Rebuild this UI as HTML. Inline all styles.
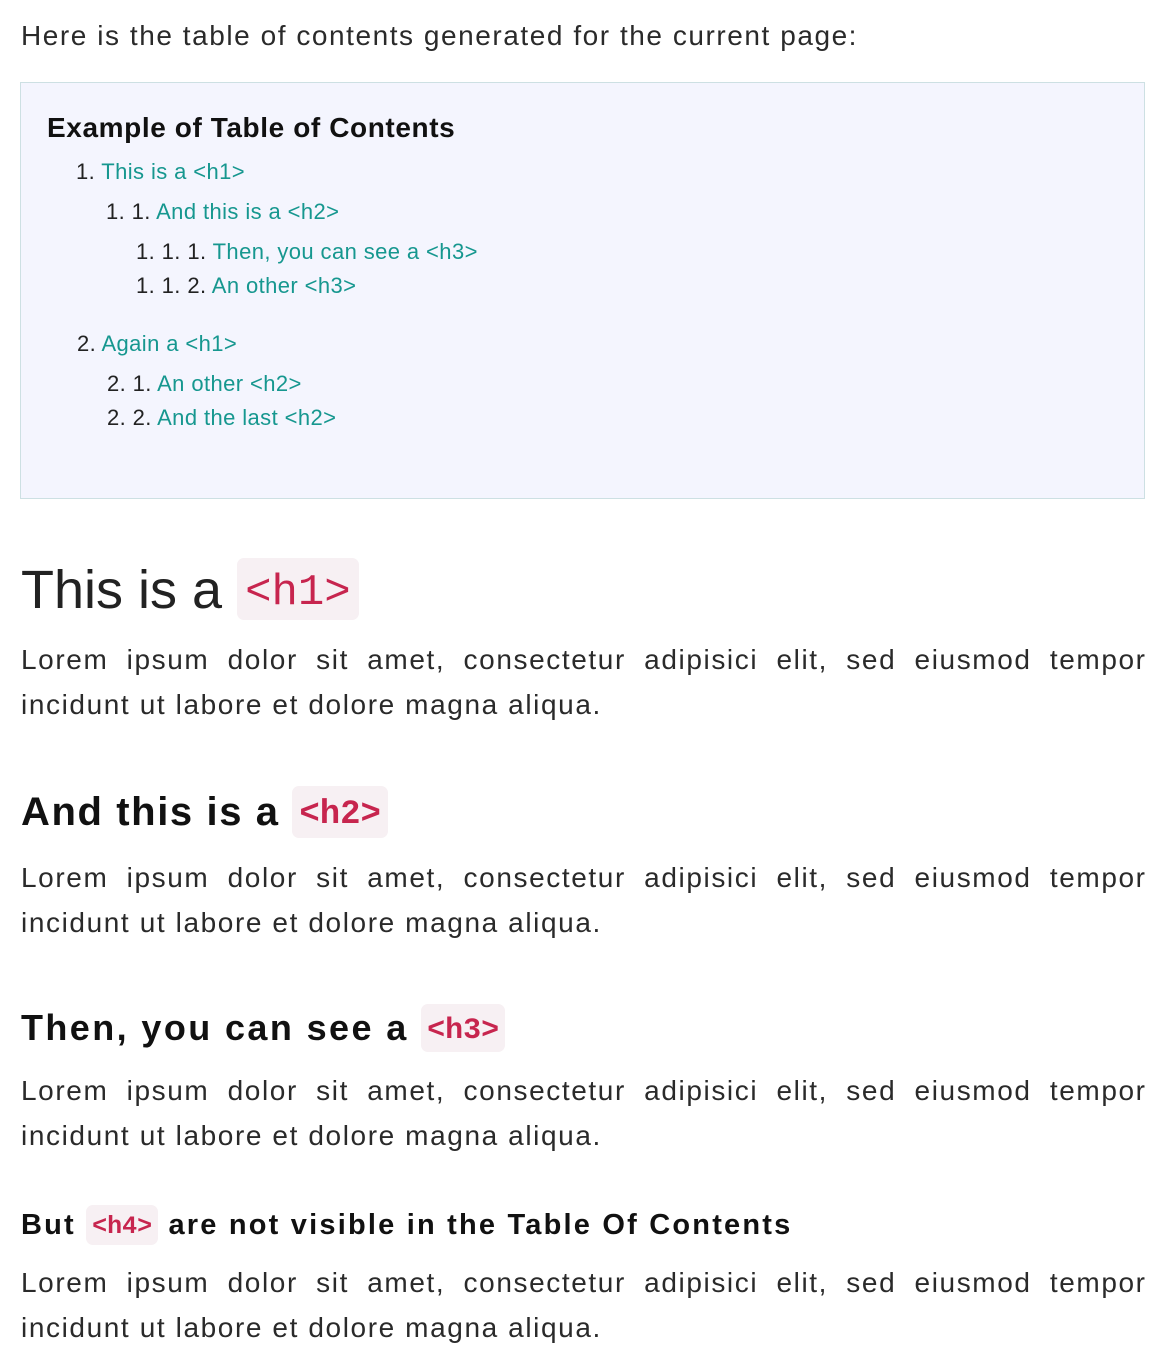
<!DOCTYPE html>
<html><head><meta charset="utf-8"><style>
html,body{margin:0;padding:0;background:#fff;width:1164px;height:1354px;overflow:hidden}
body{position:relative;font-family:"Liberation Sans",sans-serif;color:#222}
.a{position:absolute;white-space:nowrap}
.toc{position:absolute;left:20px;top:82px;width:1123px;height:415px;background:#f4f5fe;border:1px solid #cde0e3}
.t{position:absolute;white-space:nowrap;font-size:22px;line-height:30px;color:#222;letter-spacing:0.4px}
.t span{color:#16978f}
.p{position:absolute;left:21px;width:1124px;font-size:28px;line-height:45px;color:#2a2a2a}
.p .l1{display:block;text-align:justify;text-align-last:justify;white-space:nowrap;letter-spacing:1.6px;margin-right:-1.6px}
.p .l2{display:block;letter-spacing:1.6px;white-space:nowrap}
code{font-family:"Liberation Mono","DejaVu Sans Mono",monospace;color:#c7254e;background:#f7f0f3;border-radius:7px;display:inline-block;letter-spacing:0}
</style></head><body>
<div class="a" style="left:21px;top:18px;font-size:28px;line-height:36px;color:#2a2a2a;letter-spacing:1.55px">Here is the table of contents generated for the current page:</div>
<div class="toc"></div>
<div class="a" style="left:47px;top:112px;font-size:28px;line-height:32px;font-weight:bold;color:#111;letter-spacing:0.6px">Example of Table of Contents</div>
<div class="t" style="left:76px;top:157px">1. <span>This is a &lt;h1&gt;</span></div>
<div class="t" style="left:106px;top:197px">1. 1. <span>And this is a &lt;h2&gt;</span></div>
<div class="t" style="left:136px;top:237px">1. 1. 1. <span>Then, you can see a &lt;h3&gt;</span></div>
<div class="t" style="left:136px;top:271px">1. 1. 2. <span>An other &lt;h3&gt;</span></div>
<div class="t" style="left:77px;top:329px">2. <span>Again a &lt;h1&gt;</span></div>
<div class="t" style="left:107px;top:369px">2. 1. <span>An other &lt;h2&gt;</span></div>
<div class="t" style="left:107px;top:403px">2. 2. <span>And the last &lt;h2&gt;</span></div>

<div class="a" style="left:21px;top:558px;font-size:54px;line-height:64px;color:#222">This is a <code style="font-size:44px;line-height:62px;height:62px;padding:4px 8px 0;box-sizing:border-box;vertical-align:top">&lt;h1&gt;</code></div>
<div class="p" style="top:637px"><span class="l1">Lorem ipsum dolor sit amet, consectetur adipisici elit, sed eiusmod tempor</span><span class="l2">incidunt ut labore et dolore magna aliqua.</span></div>

<div class="a" style="left:21px;top:786px;font-size:40px;line-height:52px;font-weight:bold;color:#111;letter-spacing:1.6px">And this is a <code style="font-size:34px;line-height:52px;height:52px;padding:3px 7px 0;box-sizing:border-box;vertical-align:top">&lt;h2&gt;</code></div>
<div class="p" style="top:855px"><span class="l1">Lorem ipsum dolor sit amet, consectetur adipisici elit, sed eiusmod tempor</span><span class="l2">incidunt ut labore et dolore magna aliqua.</span></div>

<div class="a" style="left:21px;top:1004px;font-size:36px;line-height:48px;font-weight:bold;color:#111;letter-spacing:2.4px">Then, you can see a <code style="font-size:30px;line-height:48px;height:48px;padding:3px 6px 0;box-sizing:border-box;vertical-align:top">&lt;h3&gt;</code></div>
<div class="p" style="top:1068px"><span class="l1">Lorem ipsum dolor sit amet, consectetur adipisici elit, sed eiusmod tempor</span><span class="l2">incidunt ut labore et dolore magna aliqua.</span></div>

<div class="a" style="left:21px;top:1205px;font-size:29px;line-height:40px;font-weight:bold;color:#111;letter-spacing:2.2px">But <code style="font-size:25px;line-height:40px;height:40px;padding:2px 6px 0;box-sizing:border-box;vertical-align:top">&lt;h4&gt;</code> are not visible in the Table Of Contents</div>
<div class="p" style="top:1260px"><span class="l1">Lorem ipsum dolor sit amet, consectetur adipisici elit, sed eiusmod tempor</span><span class="l2">incidunt ut labore et dolore magna aliqua.</span></div>
</body></html>
